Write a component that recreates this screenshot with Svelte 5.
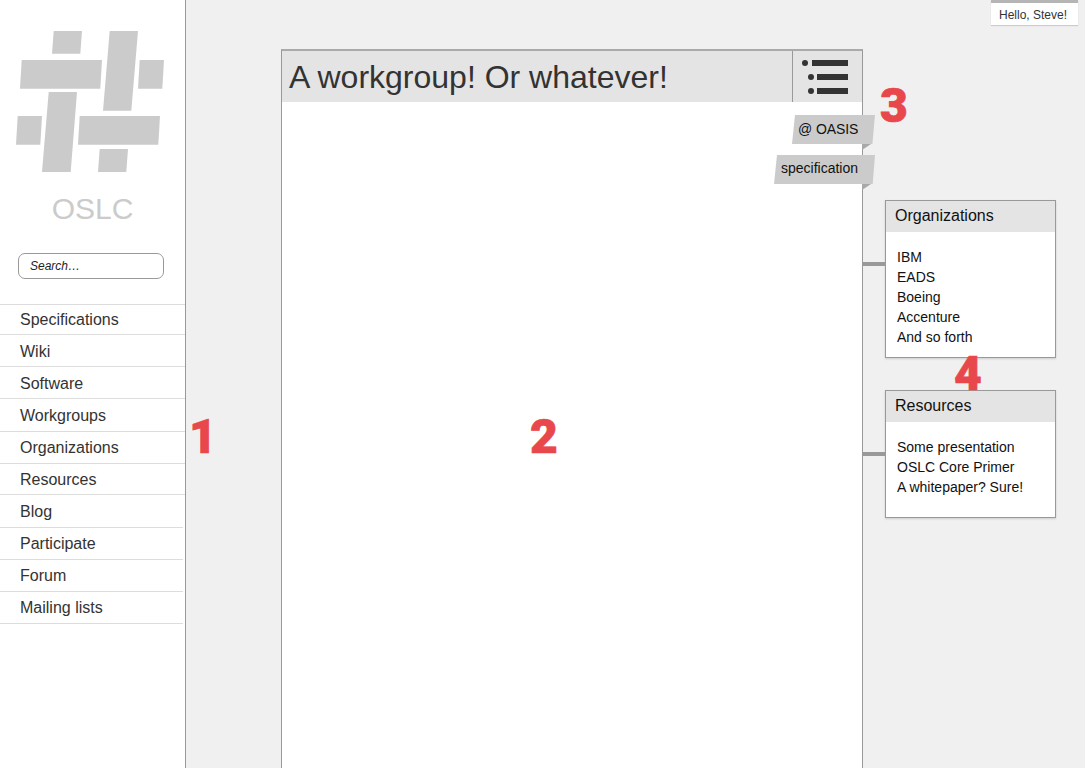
<script>
  const nav = ['Specifications','Wiki','Software','Workgroups','Organizations','Resources','Blog','Participate','Forum','Mailing lists'];
  const logo = [
    '53.7,31 82,31 80.3,53.7 52,53.7',
    '21.7,60 102,60 100.3,88.7 20,88.7',
    '109.7,31 138,31 131.3,110.7 103,110.7',
    '139.7,60 164,60 162.3,88.7 138,88.7',
    '48.7,92 77,92 70.7,172 42,172',
    '17.7,116 42,116 40.3,144.7 16,144.7',
    '79.7,116 160,116 158.3,144.7 78,144.7',
    '99.7,149 128,149 126.3,172 98,172'
  ];
  const cards = [
    { title: 'Organizations', items: ['IBM','EADS','Boeing','Accenture','And so forth'] },
    { title: 'Resources', items: ['Some presentation','OSLC Core Primer','A whitepaper? Sure!'] }
  ];
  const marks = [
    { n: '1', cls: 'm1' }, { n: '2', cls: 'm2' }, { n: '3', cls: 'm3' }, { n: '4', cls: 'm4' }
  ];
</script>

<div class="page">
  <aside class="side">
    <svg class="logo" width="185" height="190" viewBox="0 0 185 190" aria-label="OSLC logo">
      {#each logo as p}<polygon points={p} fill="#cbcbcb" />{/each}
    </svg>
    <div class="brand">OSLC</div>
    <div class="search">Search…</div>
    <nav>
      {#each nav as item}<div class="nav-item">{item}</div>{/each}
    </nav>
  </aside>

  <main class="main">
    <section class="panel">
      <header class="head">
        <h1>A workgroup! Or whatever!</h1>
        <div class="menu">
          <svg width="69" height="50" viewBox="0 0 69 50" aria-label="menu">
            <circle cx="12" cy="12" r="3" fill="#333" />
            <rect x="19" y="9" width="36" height="6" fill="#333" />
            <circle cx="18" cy="26" r="3" fill="#333" />
            <rect x="24" y="23" width="31" height="6" fill="#333" />
            <circle cx="18" cy="40" r="3" fill="#333" />
            <rect x="24" y="37" width="31" height="6" fill="#333" />
          </svg>
        </div>
      </header>
      <div class="tags">
        <div class="tag"><span class="tag-label one">@ OASIS</span></div>
        <div class="tag"><span class="tag-label two">specification</span></div>
      </div>
    </section>

    <div class="cards">
      {#each cards as c}
        <div class="card">
          <h2>{c.title}</h2>
          <ul>
            {#each c.items as i}<li>{i}</li>{/each}
          </ul>
        </div>
      {/each}
    </div>
  </main>

  <div class="hello">Hello, Steve!</div>
  {#each marks as m}<div class="mark {m.cls}">{m.n}</div>{/each}
</div>

<style>
  :global(body) { margin: 0; background: #efefef; }
  .page {
    position: relative;
    display: flex;
    width: 1085px;
    height: 768px;
    overflow: hidden;
    background: #f0f0f0;
    font-family: "Liberation Sans", Arial, sans-serif;
    color: #333;
  }
  .side {
    width: 185px;
    flex: none;
    background: #fff;
    border-right: 1px solid #999;
    display: flex;
    flex-direction: column;
  }
  .logo { display: block; height: 190px; }
  .brand {
    text-align: center;
    font-size: 30px;
    line-height: 38px;
    color: #cbcbcb;
  }
  .search {
    box-sizing: border-box;
    margin: 25px 21px 0 18px;
    height: 26px;
    border: 1px solid #999;
    border-radius: 7px;
    padding-left: 11px;
    font-size: 12px;
    line-height: 24px;
    font-style: italic;
    color: #222;
  }
  nav { margin-top: 25px; border-top: 1px solid #ddd; }
  .nav-item {
    box-sizing: border-box;
    height: 32px;
    padding-left: 20px;
    border-bottom: 1px solid #ddd;
    font-size: 16px;
    line-height: 34px;
  }
  .nav-item:nth-child(1) { height: 30px; line-height: 29px; }
  .nav-item:nth-child(4) { height: 33px; }
  .nav-item:nth-child(5) { line-height: 32px; }
  .nav-item:nth-child(6) { height: 31px; line-height: 32px; }
  .nav-item:nth-child(7) { height: 33px; margin-right: 2px; }
  .nav-item:nth-child(n+8) { margin-right: 2px; line-height: 32px; }
  .main {
    flex: 1;
    display: flex;
    align-items: flex-start;
    padding: 49px 0 0 95px;
    min-width: 0;
  }
  .panel {
    position: relative;
    box-sizing: border-box;
    width: 582px;
    height: 760px;
    flex: none;
    background: #fff;
    border: 1px solid #999;
    border-top: 2px solid #aaa;
  }
  .head {
    display: flex;
    height: 51px;
    background: #e4e4e4;
  }
  h1 {
    flex: 1;
    margin: 0;
    padding: 1px 0 0 7px;
    font-size: 32px;
    font-weight: 400;
    line-height: 51px;
    color: #333;
  }
  .menu { box-sizing: border-box; width: 70px; border-left: 1px solid #999; }
  .menu svg { display: block; }
  .tags {
    position: absolute;
    top: 64px;
    right: -13px;
    display: flex;
    flex-direction: column;
    align-items: flex-end;
    gap: 11px;
  }
  .tag { position: relative; height: 29px; }
  .tag::after {
    content: "";
    position: absolute;
    right: 4px;
    top: 29px;
    width: 9px;
    height: 6px;
    background: #a8a8a8;
    clip-path: polygon(0 0, 100% 0, 0 100%);
  }
  .tag-label {
    display: block;
    height: 29px;
    box-sizing: border-box;
    background: #cbcbcb;
    font-size: 14px;
    line-height: 27px;
    color: #111;
    white-space: nowrap;
  }
  .one { width: 83px; padding-left: 6px; line-height: 28px; letter-spacing: -0.1px; clip-path: polygon(3px 0, 100% 0, 80.4px 100%, 0 100%); }
  .two { width: 101px; padding-left: 7px; clip-path: polygon(3px 0, 100% 0, 98.7px 100%, 0 100%); }
  .cards {
    display: flex;
    flex-direction: column;
    gap: 32px;
    margin: 151px 0 0 22px;
  }
  .card {
    position: relative;
    box-sizing: border-box;
    width: 171px;
    background: #fff;
    border: 1px solid #999;
    box-shadow: 0 1px 2px rgba(0,0,0,.15);
    color: #111;
  }
  .card::before {
    content: "";
    position: absolute;
    left: -23px;
    top: 61px;
    width: 22px;
    height: 4px;
    background: #999;
  }
  h2 {
    margin: 0;
    height: 31px;
    background: #e4e4e4;
    padding-left: 9px;
    font-size: 16px;
    font-weight: 400;
    line-height: 29px;
  }
  ul {
    list-style: none;
    margin: 0;
    padding: 15px 0 10px 11px;
    font-size: 14px;
    line-height: 20px;
  }
  .card:last-child ul { padding-bottom: 20px; }
  .hello {
    position: absolute;
    top: 0;
    left: 991px;
    box-sizing: border-box;
    width: 87px;
    height: 25px;
    padding-left: 8px;
    background: #fff;
    border-top: 3px solid #b5b5b5;
    box-shadow: 0 1px 1px rgba(0,0,0,.15);
    font-size: 12px;
    line-height: 24px;
  }
  .mark {
    position: absolute;
    font-family: Roboto, sans-serif;
    font-weight: 900;
    font-size: 48px;
    line-height: 50px;
    color: #e8474c;
    -webkit-text-stroke: 0.7px #e8474c;
  }
  .m1 { left: 189px; top: 412px; }
  .m2 { left: 530px; top: 412px; }
  .m3 { left: 880px; top: 81px; }
  .m4 { left: 954px; top: 349px; }
</style>
